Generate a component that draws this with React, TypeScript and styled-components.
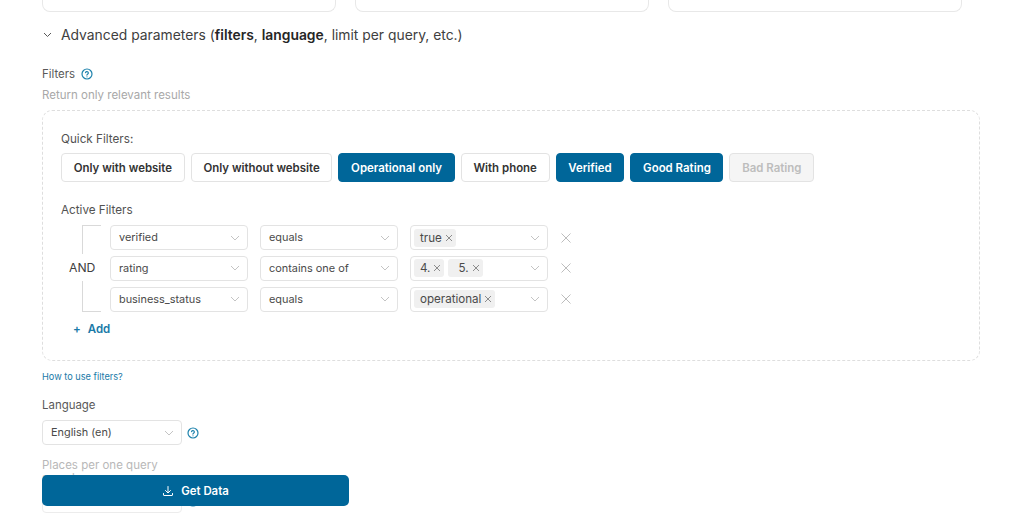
import React from 'react';
import styled, { createGlobalStyle } from 'styled-components';

const Global = createGlobalStyle`
  html, body { margin: 0; padding: 0; background: #fff; }
  body { font-family: Inter, "Liberation Sans", sans-serif; color: #3f3f46; }
  #root { width: 1024px; height: 525px; overflow: hidden; position: relative; }
`;

const Page = styled.div`
  padding-left: 42px;
  width: 938px;
  display: flex;
  flex-direction: column;
  align-items: flex-start;
`;
const TopCards = styled.div`
  display: grid;
  grid-template-columns: repeat(3, 1fr);
  gap: 19px;
  width: 919.5px;
`;
const TopCard = styled.div`
  height: 11px;
  border: 1px solid #e8e8e8;
  border-top: none;
  border-radius: 0 0 8px 8px;
`;
const Advanced = styled.div`
  display: flex;
  align-items: center;
  gap: 9px;
  height: 20px;
  margin-top: 12.5px;
  margin-left: 1px;
  font-size: 13.86px;
  color: #404040;
  b { font-weight: 600; color: #262626; }
`;
const Label = styled.div`
  display: flex;
  align-items: center;
  gap: 6px;
  height: 16px;
  font-size: 11.45px;
  color: #595959;
`;
const FiltersLabel = styled(Label)`
  margin-top: 21px;
`;
const Hint = styled.div`
  margin-top: 5px;
  height: 16px;
  line-height: 16px;
  font-size: 11.5px;
  color: #a8a8a8;
`;
const Panel = styled.div`
  box-sizing: border-box;
  margin-top: 7.5px;
  width: 938px;
  height: 251px;
  border: 1px dashed #dedede;
  border-radius: 10px;
  padding: 20px 18px 0;
`;
const PanelTitle = styled.div`
  height: 16px;
  line-height: 16px;
  font-size: 11.7px;
  color: #525252;
`;
const QuickRow = styled.div`
  display: flex;
  gap: 6px;
  margin-top: 6px;
`;
const Quick = styled.div<{ $state?: 'on' | 'off' | 'disabled' }>`
  box-sizing: border-box;
  height: 29px;
  padding: 0 11.7px;
  display: flex;
  align-items: center;
  border-radius: 4px;
  font-size: 11.45px;
  font-weight: 600;
  white-space: nowrap;
  border: 1px solid ${p => (p.$state === 'on' ? '#006699' : '#e3e3e3')};
  background: ${p => (p.$state === 'on' ? '#006699' : p.$state === 'disabled' ? '#f5f5f5' : '#fff')};
  color: ${p => (p.$state === 'on' ? '#fff' : p.$state === 'disabled' ? '#bdbdbd' : '#333')};
`;
const ActiveTitle = styled(PanelTitle)`
  margin-top: 20px;
`;
const Rules = styled.div`
  display: flex;
  margin-top: 7px;
`;
const Bracket = styled.div`
  position: relative;
  width: 48px;
  flex: none;
  display: flex;
  align-items: center;
  box-sizing: border-box;
  padding-bottom: 2px;
  font-size: 12.2px;
  font-weight: 400;
  color: #404040;
  margin-left: 8px;
  span {
    background: #fff;
    padding: 6px 0;
    position: relative;
  }
  &::before {
    content: '';
    position: absolute;
    left: 13px;
    top: 0;
    bottom: 0;
    width: 19px;
    border: 1px solid #d9d9d9;
    border-right: none;
    box-sizing: border-box;
  }
`;
const RuleList = styled.div`
  display: flex;
  flex-direction: column;
  gap: 5.75px;
  margin-left: -7px;
`;
const Row = styled.div`
  display: flex;
  align-items: center;
  gap: 12px;
`;
const Select = styled.div<{ $width?: number }>`
  box-sizing: border-box;
  width: ${p => p.$width ?? 138}px;
  height: 25px;
  border: 1px solid #e3e3e3;
  border-radius: 4px;
  background: #fff;
  display: flex;
  align-items: center;
  padding: 0 2px 0 8px;
  font-size: 10.9px;
  color: #4a4a4a;
  flex: none;
`;
const SelectText = styled.div`
  flex: 1;
  white-space: nowrap;
  padding-bottom: 1px;
`;
const TagBox = styled(Select)`
  padding-left: 3px;
`;
const Tags = styled.div`
  flex: 1;
  display: flex;
  gap: 4px;
`;
const Tag = styled.div<{ $pad?: number }>`
  height: 18px;
  border-radius: 3px;
  background: #f0f0f0;
  padding: 0 3px 0 ${p => p.$pad ?? 6}px;
  display: flex;
  align-items: center;
  gap: 3px;
  font-size: 11.6px;
  color: #4a4a4a;
`;
const Chevron = styled.svg`
  width: 16px;
  height: 16px;
  margin-right: 2px;
  flex: none;
  fill: none;
  stroke: #c4c4c4;
  stroke-width: 1;
`;
const Remove = styled.svg`
  width: 12px;
  height: 12px;
  flex: none;
  fill: none;
  stroke: #bdbdbd;
  stroke-width: 1;
`;
const TagX = styled.svg`
  width: 8px;
  height: 8px;
  fill: none;
  stroke: #8c8c8c;
  stroke-width: 1;
`;
const AddRow = styled.div`
  display: flex;
  align-items: center;
  gap: 7px;
  margin: 9px 0 0 12px;
  height: 16px;
  font-size: 11.5px;
  font-weight: 600;
  color: #1a7aa8;
`;
const HowTo = styled.div`
  margin-top: 10px;
  height: 12px;
  line-height: 12px;
  font-size: 9.2px;
  color: #1a7aa8;
`;
const LanguageLabel = styled(Label)`
  margin-top: 14px;
`;
const LangRow = styled.div`
  display: flex;
  align-items: center;
  gap: 5px;
  margin-top: 7px;
`;
const PlacesLabel = styled.div`
  margin-top: 14px;
  width: 140px;
  font-size: 11.5px;
  line-height: 13px;
  color: #b8b8b8;
`;
const PlacesRow = styled(LangRow)`
  margin-top: 3px;
`;
const PlacesInput = styled(Select)`
  border-color: #ececec;
`;
const GetData = styled.div`
  position: absolute;
  left: 42px;
  top: 475px;
  width: 307px;
  height: 31px;
  border-radius: 5px;
  background: #006699;
  color: #fff;
  display: flex;
  align-items: center;
  justify-content: center;
  gap: 7px;
  font-size: 11.4px;
  font-weight: 600;
`;

const ChevronIcon = () => (
  <Chevron viewBox="0 0 16 16"><path d="M4 6 8 10 12 6" /></Chevron>
);
const XIcon = () => (
  <TagX viewBox="0 0 8 8"><path d="M1 1 7 7M7 1 1 7" /></TagX>
);
const Help = () => (
  <svg width={12} height={12} viewBox="0 0 24 24" fill="none" stroke="#1f83ad" strokeWidth="2.4" strokeLinecap="round">
    <circle cx="12" cy="12" r="10" />
    <path d="M9 9.2a3 3 0 0 1 5.8 1c0 2-3 2.6-3 4" />
    <path d="M12 17.6h.01" />
  </svg>
);

const rules = [
  { field: 'verified', op: 'equals', tags: [{ t: 'true' }] },
  { field: 'rating', op: 'contains one of', tags: [{ t: '4.' }, { t: '5.', pad: 10 }] },
  { field: 'business_status', op: 'equals', tags: [{ t: 'operational' }] },
];

const quick: { label: string; state?: 'on' | 'off' | 'disabled' }[] = [
  { label: 'Only with website' },
  { label: 'Only without website' },
  { label: 'Operational only', state: 'on' },
  { label: 'With phone' },
  { label: 'Verified', state: 'on' },
  { label: 'Good Rating', state: 'on' },
  { label: 'Bad Rating', state: 'disabled' },
];

export default function App() {
  return (
    <>
      <Global />
      <Page>
        <TopCards><TopCard /><TopCard /><TopCard /></TopCards>
        <Advanced>
          <svg width="9" height="9" viewBox="0 0 9 9" fill="none" stroke="#595959" strokeWidth="1">
            <path d="M1 3 4.5 6.5 8 3" />
          </svg>
          <span>Advanced parameters (<b>filters</b>, <b>language</b>, limit per query, etc.)</span>
        </Advanced>
        <FiltersLabel>Filters <Help /></FiltersLabel>
        <Hint>Return only relevant results</Hint>
        <Panel>
          <PanelTitle>Quick Filters:</PanelTitle>
          <QuickRow>
            {quick.map(q => <Quick key={q.label} $state={q.state}>{q.label}</Quick>)}
          </QuickRow>
          <ActiveTitle>Active Filters</ActiveTitle>
          <Rules>
            <Bracket><span>AND</span></Bracket>
            <RuleList>
              {rules.map(r => (
                <Row key={r.field}>
                  <Select><SelectText>{r.field}</SelectText><ChevronIcon /></Select>
                  <Select><SelectText>{r.op}</SelectText><ChevronIcon /></Select>
                  <TagBox>
                    <Tags>
                      {r.tags.map(tag => (
                        <Tag key={tag.t} $pad={tag.pad}>{tag.t}<XIcon /></Tag>
                      ))}
                    </Tags>
                    <ChevronIcon />
                  </TagBox>
                  <Remove viewBox="0 0 12 12"><path d="M1.5 1.5 10.5 10.5M10.5 1.5 1.5 10.5" /></Remove>
                </Row>
              ))}
            </RuleList>
          </Rules>
          <AddRow><span>+</span><span>Add</span></AddRow>
        </Panel>
        <HowTo>How to use filters?</HowTo>
        <LanguageLabel>Language</LanguageLabel>
        <LangRow>
          <Select $width={140}><SelectText>English (en)</SelectText><ChevronIcon /></Select>
          <Help />
        </LangRow>
        <PlacesLabel>Places per one query search</PlacesLabel>
        <PlacesRow>
          <PlacesInput $width={140} />
          <Help />
        </PlacesRow>
      </Page>
      <GetData>
        <svg width="12" height="12" viewBox="0 0 24 24" fill="none" stroke="#fff" strokeWidth="2" strokeLinecap="round" strokeLinejoin="round">
          <path d="M12 3v12" /><path d="M7 11l5 5 5-5" /><path d="M3 17v3a1 1 0 0 0 1 1h16a1 1 0 0 0 1-1v-3" />
        </svg>
        Get Data
      </GetData>
    </>
  );
}
